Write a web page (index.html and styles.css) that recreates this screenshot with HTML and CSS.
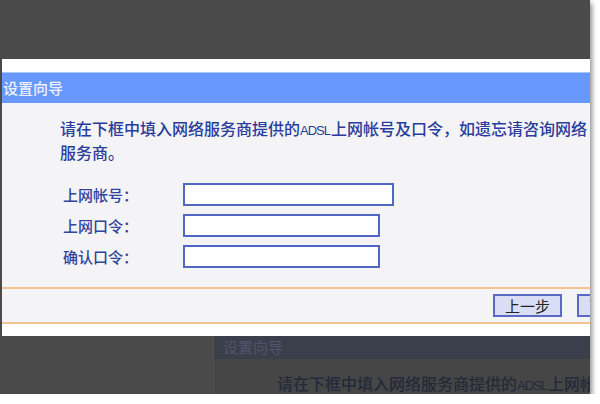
FILE: index.html
```html
<!DOCTYPE html>
<html lang="zh-CN">
<head>
    <meta charset="UTF-8">
    <title>设置向导</title>
    <link rel="stylesheet" href="styles.css">
</head>
<body>
    <div class="screen">
        <div class="top-dim"></div>

        <div class="dialog">
            <div class="dialog-gap"></div>
            <div class="dialog-title">设置向导</div>
            <div class="dialog-body">
                <p class="intro">请在下框中填入网络服务商提供的<span class="latin">ADSL</span>上网帐号及口令，如遗忘请咨询网络<br>服务商。</p>
                <div class="form">
                    <div class="row">
                        <label class="label">上网帐号：</label>
                        <input class="field field-wide" type="text">
                    </div>
                    <div class="row">
                        <label class="label">上网口令：</label>
                        <input class="field" type="password">
                    </div>
                    <div class="row">
                        <label class="label">确认口令：</label>
                        <input class="field" type="password">
                    </div>
                </div>
            </div>
            <div class="actions">
                <button class="btn">上一步</button>
                <button class="btn">下一步</button>
            </div>
            <div class="dialog-foot"></div>
        </div>

        <div class="bottom-dim">
            <div class="ghost">
                <div class="ghost-title">设置向导</div>
                <div class="ghost-body">请在下框中填入网络服务商提供的<span class="latin">ADSL</span>上网帐号及口令</div>
            </div>
        </div>
    </div>
</body>
</html>
```

FILE: styles.css
```css
* {
    margin: 0;
    padding: 0;
    box-sizing: border-box;
}

body {
    background: #ffffff;
    font-family: "Noto Sans CJK SC", "Liberation Sans", sans-serif;
}

.screen {
    width: 590px;
    height: 394px;
    background: #4a4a4a;
    box-shadow: 2px 3px 5px rgba(0, 0, 0, 0.45);
    overflow: hidden;
    display: flex;
    flex-direction: column;
}

.top-dim {
    height: 59px;
    flex-shrink: 0;
}

.dialog {
    margin-left: 2px;
    background: #ffffff;
    flex-shrink: 0;
}

.dialog-gap {
    height: 13px;
}

.dialog-title {
    height: 31px;
    background: #6799fc;
    border-top: 1px solid #a9c5fd;
    color: #eef2ff;
    font-size: 15px;
    font-weight: 500;
    line-height: 29px;
    padding-left: 1px;
}

.dialog-body {
    background: #f4f4f6;
    padding: 13px 0 19px 58px;
    color: #2a3c9c;
    font-weight: 500;
}

.intro {
    font-size: 16px;
    line-height: 24px;
    white-space: nowrap;
}

.latin {
    font-family: "Liberation Sans", sans-serif;
    font-size: 13px;
    font-weight: normal;
    letter-spacing: -1px;
    line-height: 1;
    padding-right: 1px;
}

.form {
    margin-top: 19px;
    display: flex;
    flex-direction: column;
    gap: 8px;
}

.row {
    display: flex;
    align-items: center;
    height: 23px;
}

.label {
    width: 123px;
    padding-left: 3px;
    font-size: 15px;
    color: #32459c;
}

.field {
    width: 197px;
    height: 23px;
    border: 2px solid #5267c4;
    background: #ffffff;
    outline: none;
}

.field-wide {
    width: 211px;
}

.actions {
    background: #f4f4f6;
    border-top: 2px solid #f6c290;
    border-bottom: 2px solid #f6c290;
    height: 37px;
    display: flex;
    align-items: center;
    gap: 15px;
    padding-left: 491px;
    overflow: hidden;
}

.btn {
    flex-shrink: 0;
    width: 69px;
    height: 23px;
    background: #d9ddf6;
    border: 2px solid #5a69c6;
    font-family: "Noto Sans CJK SC", sans-serif;
    font-size: 15px;
    line-height: 17px;
    color: #222222;
}

.dialog-foot {
    height: 12px;
}

.bottom-dim {
    flex: 1;
    padding-left: 213px;
}

.ghost {
    height: 100%;
    border-left: 1px solid #56524c;
    white-space: nowrap;
    overflow: hidden;
}

.ghost-title {
    height: 23px;
    background: #3b3f4b;
    color: #4f566b;
    font-size: 15px;
    line-height: 21px;
    padding-left: 9px;
}

.ghost-body {
    background: #464646;
    height: 100%;
    padding: 12px 0 0 63px;
    font-size: 16px;
    font-weight: 500;
    line-height: 24px;
    color: #25293a;
}
```
